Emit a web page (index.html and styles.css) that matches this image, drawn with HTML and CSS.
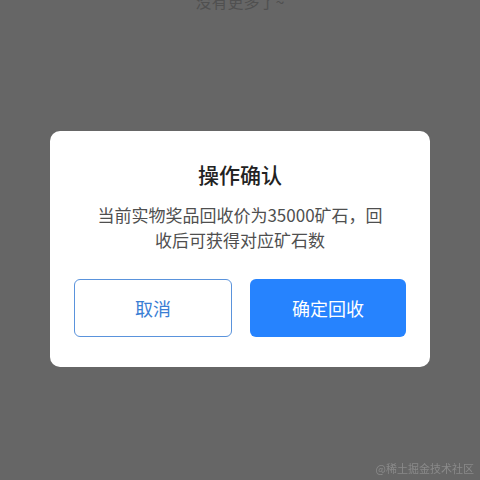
FILE: index.html
```html
<!DOCTYPE html>
<html lang="zh-CN">

<head>
    <meta charset="UTF-8">
    <meta name="viewport" content="width=device-width, initial-scale=1.0">
    <title>操作确认</title>
    <link rel="stylesheet" href="styles.css">
</head>

<body>

    <div class="list-end">没有更多了~</div>

    <!-- recycle confirm dialog -->
    <div class="mask">
        <div class="dialog">
            <h2 class="dialog-title">操作确认</h2>
            <p class="dialog-text">当前实物奖品回收价为35000矿石，回收后可获得对应矿石数</p>
            <div class="dialog-actions">
                <button type="button" class="btn btn-cancel">取消</button>
                <button type="button" class="btn btn-primary">确定回收</button>
            </div>
        </div>
    </div>

    <div class="watermark">@稀土掘金技术社区</div>

</body>

</html>
```

FILE: styles.css
```css
html,
body {
    height: 100%;
}

body {
    margin: 0;
    background: #666666;
    font-family: "Noto Sans CJK SC", "Noto Sans", sans-serif;
    overflow: hidden;
}

.list-end {
    margin-top: -10px;
    text-align: center;
    font-size: 16px;
    line-height: 22px;
    color: #505050;
}

.mask {
    position: fixed;
    inset: 0;
    display: flex;
    align-items: center;
    justify-content: center;
}

.dialog {
    width: 380px;
    margin-top: 17px;
    box-sizing: border-box;
    padding: 28px 24px 30px;
    background: #fff;
    border-radius: 10px;
    text-align: center;
}

.dialog-title {
    margin: 0;
    font-size: 21px;
    line-height: 30px;
    font-weight: 500;
    color: #222;
}

.dialog-text {
    margin: 13px 16px 0;
    font-size: 17px;
    line-height: 25px;
    color: #4f4f4f;
}

.dialog-actions {
    display: flex;
    gap: 18px;
    margin-top: 27px;
}

.btn {
    flex: 1;
    height: 58px;
    border-radius: 6px;
    font-family: inherit;
    font-size: 18px;
    cursor: pointer;
}

.btn-cancel {
    background: #fff;
    border: 1px solid #5a93dc;
    color: #3a7ed4;
}

.btn-primary {
    background: #2683fe;
    border: none;
    color: #fff;
}

.watermark {
    position: fixed;
    right: 6px;
    bottom: 4px;
    font-size: 11px;
    color: #8a8a8a;
}
```
